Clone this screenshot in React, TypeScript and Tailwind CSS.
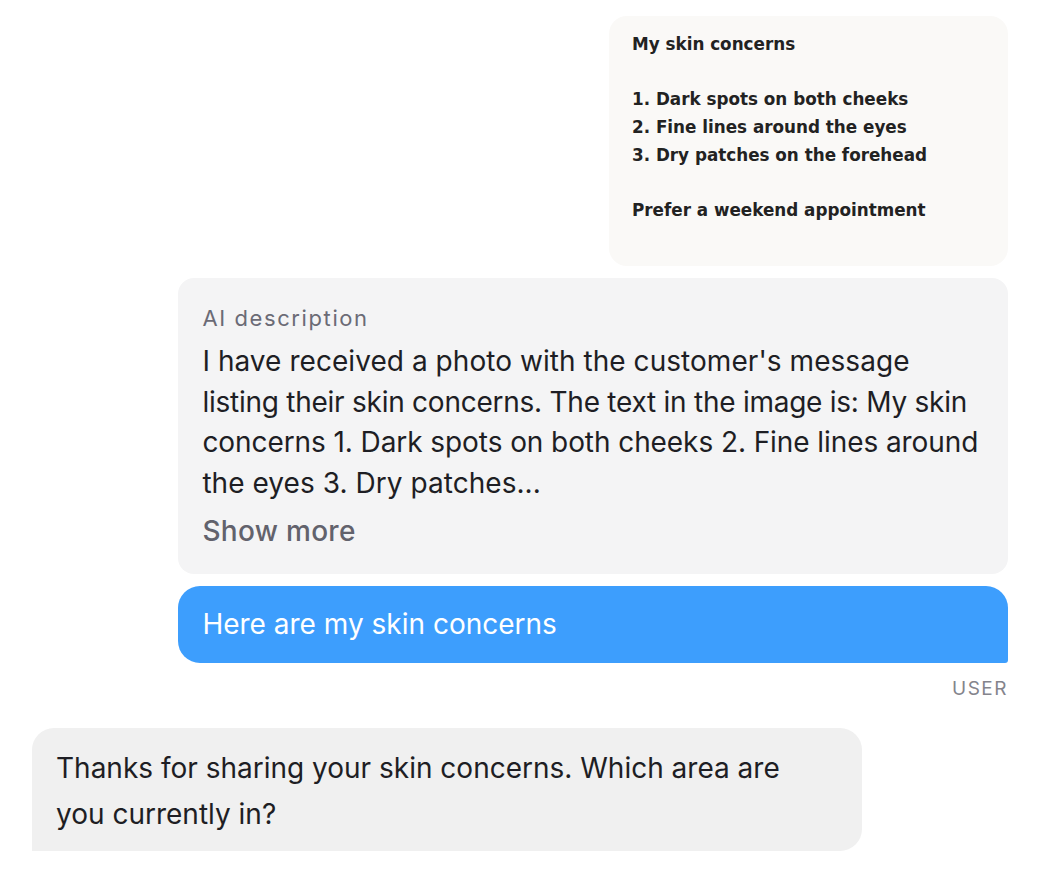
const concerns = `My skin concerns

1. Dark spots on both cheeks
2. Fine lines around the eyes
3. Dry patches on the forehead

Prefer a weekend appointment`;

// tracking is tuned per line so the wraps match the screenshot
const description = [
    { text: "I have received a photo with the customer's message", cls: "tracking-[0.05px]" },
    { text: "listing their skin concerns. The text in the image is: My skin", cls: "tracking-[-0.25px]" },
    { text: "concerns 1. Dark spots on both cheeks 2. Fine lines around", cls: "tracking-[-0.08px]" },
    { text: "the eyes 3. Dry patches...", cls: "tracking-[0.05px]" },
];

const App = () => {
    return (
        <div className="min-h-[870px] bg-white px-8 pt-4 font-['Inter',sans-serif] text-[#1e1e24]">
            <div className="flex flex-col items-end gap-3">
                <div className="w-[399px] h-[250px] rounded-[18px] bg-[#faf9f7] px-[23px] pt-[15px]">
                    <p className="whitespace-pre-line font-['DejaVu_Sans',sans-serif] text-[16.8px] font-bold leading-[27.7px] text-[#222]">
                        {concerns}
                    </p>
                </div>
                <div className="w-[85%] rounded-[16px] bg-[#f4f4f5] px-6 pt-[24px] pb-[23px]">
                    <div className="text-[22px] leading-[32px] tracking-[1.6px] text-[#6b6b76]">
                        AI description
                    </div>
                    <p className="mt-[7px] text-[28px] leading-[40.5px]">
                        {description.map((line, i) => (
                            <span key={i} className={`block whitespace-nowrap ${line.cls}`}>
                                {line.text}
                            </span>
                        ))}
                    </p>
                    <div className="mt-[8px] text-[28px] leading-[40px] font-medium tracking-[0.3px] text-[#62626c]">
                        Show more
                    </div>
                </div>
                <div className="w-[85%] rounded-[22px] rounded-br-[3px] bg-[#3d9efd] px-6 py-[18px] text-[28px] leading-[40.5px] text-white">
                    Here are my skin concerns
                </div>
            </div>
            <div className="mt-[14px] text-right text-[19px] leading-[24px] tracking-[1.5px] text-[#84848c]">
                USER
            </div>
            <div className="mt-[27px] flex">
                <div className="w-[85%] rounded-[22px] rounded-bl-none bg-[#f0f0f0] px-6 pt-[17px] pb-[14px] text-[28px] leading-[46px]">
                    Thanks for sharing your skin concerns. Which area are
                    <br />
                    you currently in?
                </div>
            </div>
        </div>
    );
};
export default App;
